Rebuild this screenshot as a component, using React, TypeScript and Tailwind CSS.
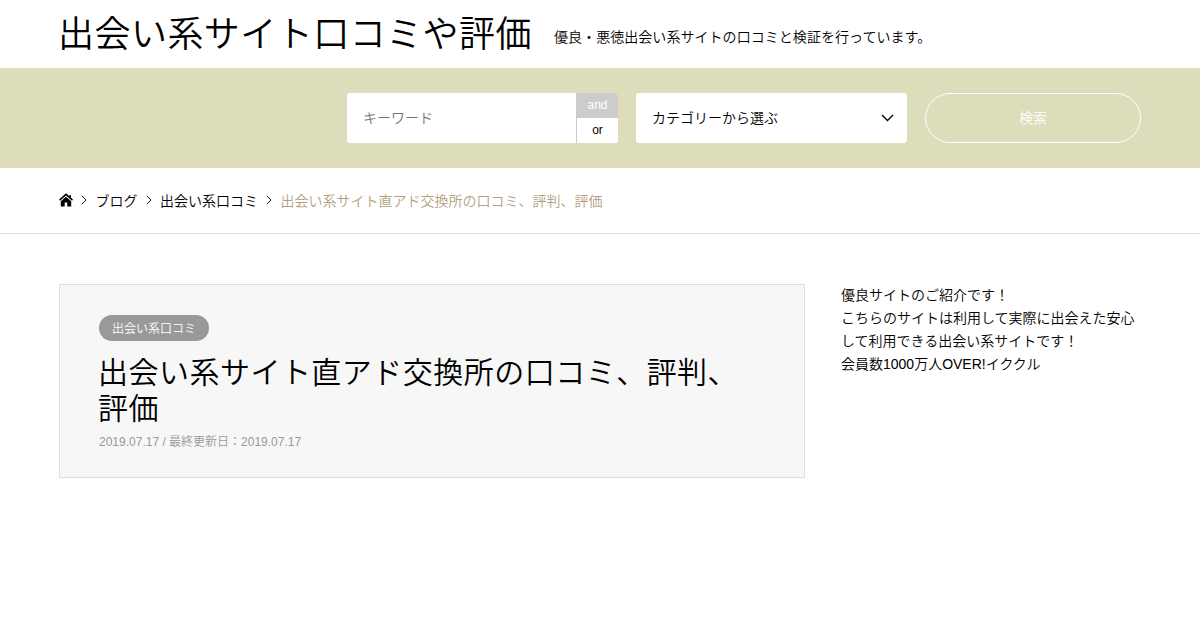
import { useState } from 'react';

const crumbs = ['ブログ', '出会い系口コミ'];

function Chevron() {
  return (
    <svg className="h-[10px] w-[6px]" viewBox="0 0 6 10" fill="none" stroke="currentColor" strokeWidth="0.9">
      <path d="M0.8 0.8L5 5L0.8 9.2" />
    </svg>
  );
}

export default function App() {
  const [mode, setMode] = useState('and');

  return (
    <div className="min-h-screen bg-white font-['Liberation_Sans','Noto_Sans_CJK_JP',sans-serif] text-sm font-[350] text-black">
      {/* ヘッダー */}
      <header className="flex h-[68px] items-center gap-[22px] pl-[58px]">
        <a href="#" className="pt-px text-[36px] leading-[68px] tracking-[0.46px]">出会い系サイト口コミや評価</a>
        <p className="pt-[5px] leading-5 tracking-[0.05px]">優良・悪徳出会い系サイトの口コミと検証を行っています。</p>
      </header>

      {/* 検索フォーム */}
      <form className="flex h-[100px] items-center justify-end gap-[18px] bg-[#dddcbb] pr-[59px]" onSubmit={(e) => e.preventDefault()}>
        <div className="flex h-[50px] w-[271px] overflow-hidden rounded-[3px] bg-white">
          <input className="w-[229px] px-4 placeholder:text-[#757575] outline-none" placeholder="キーワード" />
          <div className="flex w-[42px] flex-col border-l border-[#ccc] text-xs">
            {['and', 'or'].map((m) => (
              <button key={m} type="button" onClick={() => setMode(m)} className={`h-[25px] pb-0.5 ${mode === m ? 'bg-[#ccc] text-white' : 'bg-white'}`}>
                {m}
              </button>
            ))}
          </div>
        </div>
        <div className="flex h-[50px] w-[271px] items-center justify-between rounded-[3px] bg-white pl-4 pr-[13px]">
          <span>カテゴリーから選ぶ</span>
          <svg className="h-[8px] w-[13px]" viewBox="0 0 13 8" fill="none" stroke="currentColor" strokeWidth="1.4">
            <path d="M1 1L6.5 6.5L12 1" />
          </svg>
        </div>
        <button className="h-[50px] w-[216px] rounded-full border border-white text-white">検索</button>
      </form>

      {/* パンくずリスト */}
      <nav className="flex h-[66px] items-center border-b border-[#ddd] pl-[59px]">
        <svg className="mb-[2px] h-[14px] w-[14px]" viewBox="0 0 14 14" fill="currentColor">
          <path d="M7 0.3L0 6.5L1 7.7L7 2.6L13 7.7L14 6.5L12 4.7V2.2H10.2V3.1Z" />
          <path d="M7 3.7L1.8 8.2V13.5H5.7V9.5H8.3V13.5H12.2V8.2Z" />
        </svg>
        {crumbs.map((c) => (
          <span key={c} className="flex items-center">
            <span className="pl-2 pr-[8.5px] pb-px"><Chevron /></span>
            <a href="#">{c}</a>
          </span>
        ))}
        <span className="pl-2 pr-[8.5px] pb-px"><Chevron /></span>
        <span className="text-[#b69e84]">出会い系サイト直アド交換所の口コミ、評判、評価</span>
      </nav>

      {/* 記事とサイドバー */}
      <main className="flex gap-9 px-[59px] pt-[50px]">
        <article className="h-[194px] w-[746px] border border-[#ddd] bg-[#f7f7f7] px-[39px] pt-[30px]">
          <a href="#" className="flex h-[26px] w-[110px] items-center justify-center rounded-full bg-[#999] pt-px text-xs text-white">出会い系口コミ</a>
          <h1 className="-ml-px mt-[14px] text-[30px] font-[350] leading-9 tracking-[0.48px]">出会い系サイト直アド交換所の口コミ、評判、評価</h1>
          <p className="mt-[5px] text-xs leading-5 text-[#999]">2019.07.17 / 最終更新日：2019.07.17</p>
        </article>
        <aside className="w-[300px] leading-[23px]">
          <p>優良サイトのご紹介です！</p>
          <p>こちらのサイトは利用して実際に出会えた安心して利用できる出会い系サイトです！</p>
          <p>会員数1000万人OVER!イククル</p>
        </aside>
      </main>
    </div>
  );
}
